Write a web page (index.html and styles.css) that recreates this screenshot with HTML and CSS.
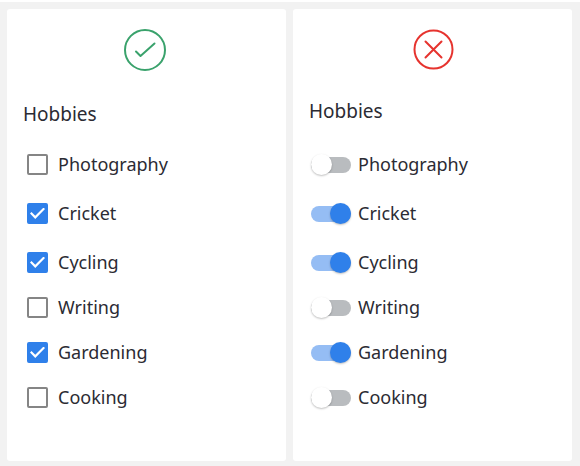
FILE: index.html
```html
<!DOCTYPE html>
<html lang="en">
<head>
<meta charset="utf-8">
<title>Hobbies</title>
<link rel="stylesheet" href="styles.css">
</head>
<body>
<main class="board">
  <section class="card card-do">
    <svg class="mark mark-do" viewBox="0 0 42 42" aria-hidden="true"><circle cx="21" cy="21" r="20"/><path d="M12 22.500l4.500 4.500L30.500 14.500"/></svg>
    <fieldset class="group">
      <legend class="title">Hobbies</legend>
      <label class="row"><input class="check" type="checkbox"><span>Photography</span></label>
      <label class="row"><input class="check" type="checkbox" checked><span>Cricket</span></label>
      <label class="row"><input class="check" type="checkbox" checked><span>Cycling</span></label>
      <label class="row"><input class="check" type="checkbox"><span>Writing</span></label>
      <label class="row"><input class="check" type="checkbox" checked><span>Gardening</span></label>
      <label class="row"><input class="check" type="checkbox"><span>Cooking</span></label>
    </fieldset>
  </section>
  <section class="card card-dont">
    <svg class="mark mark-dont" viewBox="0 0 42 42" aria-hidden="true"><circle cx="21.500" cy="20.500" r="19"/><path d="M13.500 12.500l16 16M29.500 12.500l-16 16"/></svg>
    <fieldset class="group">
      <legend class="title">Hobbies</legend>
      <label class="row"><input class="switch" type="checkbox" role="switch"><span>Photography</span></label>
      <label class="row"><input class="switch" type="checkbox" role="switch" checked><span>Cricket</span></label>
      <label class="row"><input class="switch" type="checkbox" role="switch" checked><span>Cycling</span></label>
      <label class="row"><input class="switch" type="checkbox" role="switch"><span>Writing</span></label>
      <label class="row"><input class="switch" type="checkbox" role="switch" checked><span>Gardening</span></label>
      <label class="row"><input class="switch" type="checkbox" role="switch"><span>Cooking</span></label>
    </fieldset>
  </section>
</main>
</body>
</html>
```
FILE: styles.css
```css
* {
  box-sizing: border-box;
}

body {
  margin: 0;
  background: #fff;
  color: #2b2b33;
  font-family: "Noto Sans", "Open Sans", sans-serif;
  font-size: 18px;
  line-height: 27px;
}

.board {
  display: grid;
  grid-template-columns: 1fr 1fr;
  gap: 7px;
  min-height: calc(100vh - 2px);
  margin-top: 2px;
  padding: 7px 8px 5px 7px;
  background: #f2f2f2;
}

.card {
  display: flex;
  flex-direction: column;
  padding: 20px 20px 20px 16px;
  border-radius: 3px;
  background: #fff;
}

.card-dont {
  padding-right: 16px;
}

.mark {
  align-self: center;
  width: 42px;
  height: 42px;
  fill: none;
  stroke-width: 2;
  stroke-linecap: round;
  stroke-linejoin: round;
}

.mark-do {
  stroke: #3aa26c;
}

.mark-dont {
  stroke: #e6332e;
}

.group {
  display: flex;
  flex-direction: column;
  min-width: 0;
  margin: 30px 0 0;
  padding: 0;
  border: 0;
}

.card-dont .group {
  margin-top: 27px;
}

.title {
  margin-bottom: 23px;
  padding: 0;
  font-size: 19px;
}

.card-dont .title {
  margin-bottom: 26px;
}

.row {
  display: flex;
  align-items: center;
  gap: 10px;
  padding-left: 4px;
}

.card-dont .row {
  gap: 7px;
  padding-left: 2px;
}

.row + .row {
  margin-top: 22px;
}

.row:nth-of-type(n + 4) {
  margin-top: 18px;
}

.check {
  appearance: none;
  flex: none;
  width: 21px;
  height: 21px;
  margin: 0;
  border: 2px solid #858585;
  border-radius: 2px;
  background: #fff;
}

.check:checked {
  display: grid;
  place-items: center;
  border-color: #2f80ea;
  background: #2f80ea;
}

.check:checked::before {
  content: "";
  width: 15px;
  height: 12px;
  background: #fff;
  clip-path: polygon(0 50%, 10% 37%, 35% 68%, 90% 0, 100% 12%, 35% 96%);
}

.switch {
  appearance: none;
  display: flex;
  align-items: center;
  flex: none;
  width: 40px;
  height: 16px;
  margin: 0;
  border-radius: 8px;
  background: #b9bcbf;
}

.switch::before {
  content: "";
  flex: none;
  width: 21px;
  height: 21px;
  border-radius: 50%;
  background: #fff;
  box-shadow: 0 1px 2px rgba(0, 0, 0, 0.25);
}

.switch:checked {
  justify-content: flex-end;
  background: #95bdf4;
}

.switch:checked::before {
  background: #2f80ea;
}
```
